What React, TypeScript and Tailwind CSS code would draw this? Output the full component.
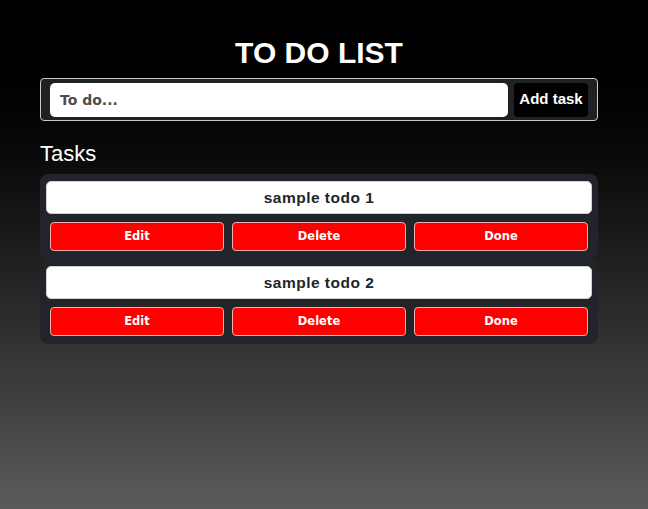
import React, { useState } from "react";

type Todo = { id: number; text: string };

function TaskCard({ todo }: { todo: Todo }) {
  return (
    <div className="rounded-lg bg-[#212529] px-[6px] pt-[7px] pb-[8px]">
      <div className="flex h-[33px] items-center justify-center rounded-[5px] border border-[#cfcfcf] bg-white text-[15.5px] font-bold tracking-[0.5px] text-[#212529]">
        {todo.text}
      </div>
      <div className="mt-[8px] grid grid-cols-3 gap-[8px] px-[4px]">
        {["Edit", "Delete", "Done"].map((label) => (
          <button
            key={label}
            className="h-[29px] rounded-[4px] border border-[#f3b0b0] bg-[#ff0000] text-[11.5px] font-bold text-white [font-family:'DejaVu_Sans',sans-serif]"
          >
            {label}
          </button>
        ))}
      </div>
    </div>
  );
}

export default function App() {
  const [todos] = useState<Todo[]>([
    { id: 1, text: "sample todo 1" },
    { id: 2, text: "sample todo 2" },
  ]);

  return (
    <div className="min-h-screen bg-gradient-to-b from-black to-[#5b5b5b] pt-[36px] [font-family:'Liberation_Sans',Arial,sans-serif]">
      <div className="ml-[40px] w-[558px]">
        <h1 className="text-center text-[30px] leading-[34px] font-bold text-white">TO DO LIST</h1>

        <div className="mt-[8px] flex h-[43px] items-center gap-[6px] rounded-[4px] border border-[#c8c8c8] bg-[#1f2225] px-[9px]">
          <input
            placeholder="To do..."
            className="h-[34px] w-[458px] rounded-[5px] bg-white px-[10px] text-[14px] font-bold text-[#333] outline-none placeholder:text-[#4d4d4d] [font-family:'DejaVu_Sans',sans-serif]"
          />
          <button className="h-[34px] w-[74px] rounded-[4px] bg-black text-[15px] font-bold text-white">
            Add task
          </button>
        </div>

        <h2 className="mt-[20px] text-[22px] leading-[25px] text-white">Tasks</h2>

        <div className="mt-[8px] flex flex-col">
          {todos.map((t) => (
            <TaskCard key={t.id} todo={t} />
          ))}
        </div>
      </div>
    </div>
  );
}
